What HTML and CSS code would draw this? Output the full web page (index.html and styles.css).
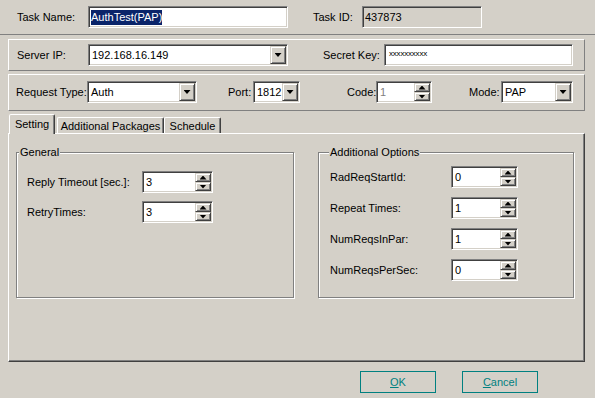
FILE: index.html
```html
<!DOCTYPE html>
<html lang="en">
<head>
    <meta charset="UTF-8">
    <title>Task Properties</title>
    <link rel="stylesheet" href="styles.css">
</head>
<body>
    <div class="dialog">
        <div class="top-bar">
            <div class="row">
                <span class="label w-71">Task Name:</span>
                <div class="field sunken w-name"><span class="sel">AuthTest(PAP)</span></div>
                <span class="label task-id-label">Task ID:</span>
                <div class="field sunken readonly w-id">437873</div>
            </div>
        </div>

        <div class="panel panel-server">
            <div class="row">
                <span class="label w-71">Server IP:</span>
                <div class="combo sunken w-server">
                    <span class="combo-value">192.168.16.149</span>
                    <span class="drop-btn raised"></span>
                </div>
                <span class="label secret-label">Secret Key:</span>
                <div class="field sunken w-secret"><span class="secret">xxxxxxxxxx</span></div>
            </div>
        </div>

        <div class="panel panel-request">
            <div class="row">
                <span class="label w-71">Request Type:</span>
                <div class="combo sunken w-type">
                    <span class="combo-value">Auth</span>
                    <span class="drop-btn raised"></span>
                </div>
                <span class="label port-label">Port:</span>
                <div class="combo sunken w-port">
                    <span class="combo-value">1812</span>
                    <span class="drop-btn raised"></span>
                </div>
                <span class="label code-label">Code:</span>
                <div class="spin sunken w-code">
                    <span class="spin-value disabled">1</span>
                    <span class="spin-btns"><span class="spin-up raised"></span><span class="spin-down raised"></span></span>
                </div>
                <span class="label mode-label">Mode:</span>
                <div class="combo sunken w-mode">
                    <span class="combo-value">PAP</span>
                    <span class="drop-btn raised"></span>
                </div>
            </div>
        </div>

        <div class="tabs">
            <div class="tab active">Setting</div>
            <div class="tab tab-packages">Additional Packages</div>
            <div class="tab tab-schedule">Schedule</div>
        </div>

        <div class="page">
            <div class="group group-general">
                <span class="legend">General</span>
                <div class="form-row">
                    <span class="label">Reply Timeout [sec.]:</span>
                    <div class="spin sunken w-spin-general">
                        <span class="spin-value">3</span>
                        <span class="spin-btns"><span class="spin-up raised"></span><span class="spin-down raised"></span></span>
                    </div>
                </div>
                <div class="form-row">
                    <span class="label">RetryTimes:</span>
                    <div class="spin sunken w-spin-general">
                        <span class="spin-value">3</span>
                        <span class="spin-btns"><span class="spin-up raised"></span><span class="spin-down raised"></span></span>
                    </div>
                </div>
            </div>

            <div class="group group-options">
                <span class="legend">Additional Options</span>
                <div class="form-row">
                    <span class="label">RadReqStartId:</span>
                    <div class="spin sunken w-spin-options">
                        <span class="spin-value">0</span>
                        <span class="spin-btns"><span class="spin-up raised"></span><span class="spin-down raised"></span></span>
                    </div>
                </div>
                <div class="form-row">
                    <span class="label">Repeat Times:</span>
                    <div class="spin sunken w-spin-options">
                        <span class="spin-value">1</span>
                        <span class="spin-btns"><span class="spin-up raised"></span><span class="spin-down raised"></span></span>
                    </div>
                </div>
                <div class="form-row">
                    <span class="label">NumReqsInPar:</span>
                    <div class="spin sunken w-spin-options">
                        <span class="spin-value">1</span>
                        <span class="spin-btns"><span class="spin-up raised"></span><span class="spin-down raised"></span></span>
                    </div>
                </div>
                <div class="form-row">
                    <span class="label">NumReqsPerSec:</span>
                    <div class="spin sunken w-spin-options">
                        <span class="spin-value">0</span>
                        <span class="spin-btns"><span class="spin-up raised"></span><span class="spin-down raised"></span></span>
                    </div>
                </div>
            </div>
        </div>

        <div class="actions">
            <button class="btn"><u>O</u>K</button>
            <button class="btn"><u>C</u>ancel</button>
        </div>
    </div>
</body>
</html>
```

FILE: styles.css
```css
* {
    margin: 0;
    padding: 0;
    box-sizing: border-box;
}

body {
    width: 595px;
    height: 398px;
    overflow: hidden;
    background: #d4d0c8;
    color: #000;
    font-family: "Liberation Sans", Arial, sans-serif;
    font-size: 11px;
}

.dialog {
    display: flex;
    flex-direction: column;
    height: 100%;
}

.row {
    display: flex;
    align-items: center;
    height: 22px;
}

.label {
    white-space: nowrap;
}

.w-71 { width: 71px; }

/* 3d borders */
.sunken {
    background: #fff;
    border: 1px solid;
    border-color: #808080 #fff #fff #808080;
    padding: 1px;
    box-shadow: inset 1px 1px #404040, inset -1px -1px #d4d0c8;
}

.raised {
    background: #d4d0c8;
    border: 1px solid;
    border-color: #d4d0c8 #404040 #404040 #d4d0c8;
    box-shadow: inset 1px 1px #fff, inset -1px -1px #808080;
}

.field {
    height: 22px;
    display: flex;
    align-items: center;
    padding-left: 2px;
}

.field.readonly {
    background: #d4d0c8;
}

.sel {
    background: #0a246a;
    color: #fff;
    line-height: 13px;
    padding: 1px 0;
}

.secret {
    font-size: 8px;
    letter-spacing: -0.2px;
    padding-left: 2px;
    padding-bottom: 3px;
}

.combo {
    height: 22px;
    display: flex;
}

.combo-value {
    flex: 1;
    align-self: center;
    padding-left: 2px;
    white-space: nowrap;
}

.drop-btn {
    width: 16px;
    display: flex;
    align-items: center;
    justify-content: center;
}

.drop-btn::after {
    content: "";
    width: 7px;
    height: 4px;
    background: #000;
    clip-path: polygon(0 0, 100% 0, 50% 100%);
}

.spin {
    height: 22px;
    display: flex;
}

.spin-value {
    flex: 1;
    align-self: center;
    padding-left: 2px;
}

.spin-value.disabled {
    color: #808080;
}

.spin-btns {
    width: 16px;
    display: flex;
    flex-direction: column;
}

.spin-up,
.spin-down {
    flex: 1;
    display: flex;
    align-items: center;
    justify-content: center;
}

.spin-up::after,
.spin-down::after {
    content: "";
    width: 7px;
    height: 4px;
    background: #000;
}

.spin-up::after {
    clip-path: polygon(50% 0, 100% 100%, 0 100%);
}

.spin-down::after {
    clip-path: polygon(0 0, 100% 0, 50% 100%);
}

/* top bar */
.top-bar {
    height: 35px;
    border-bottom: 1px solid #808080;
    padding: 6px 0 0 17px;
}

.w-name { width: 200px; }

.task-id-label {
    margin-left: 25px;
    width: 49px;
}

.w-id { width: 120px; }

/* panels */
.panel {
    margin-left: 8px;
    width: 577px;
    border: 1px solid;
    border-color: #fff #808080 #808080 #fff;
}

.panel-server {
    margin-top: 4px;
    height: 32px;
    padding: 4px 0 0 8px;
}

.w-server { width: 200px; }

.secret-label {
    margin-left: 35px;
    width: 61px;
}

.w-secret { width: 189px; }

.panel-request {
    margin-top: 3px;
    height: 37px;
    padding: 6px 0 0 7px;
}

.w-type { width: 110px; }

.port-label {
    margin-left: 31px;
    width: 25px;
}

.w-port { width: 47px; }

.code-label {
    margin-left: 47px;
    width: 29px;
}

.w-code { width: 56px; }

.mode-label {
    margin-left: 37px;
    width: 32px;
}

.w-mode { width: 72px; }

/* tabs */
.tabs {
    margin-top: 3px;
    height: 19px;
    padding-left: 9px;
    display: flex;
    align-items: flex-end;
}

.tab {
    height: 16px;
    display: flex;
    align-items: center;
    justify-content: center;
    border: 1px solid;
    border-bottom: none;
    border-color: #fff #404040 transparent #fff;
    border-radius: 2px 2px 0 0;
    box-shadow: inset -1px 0 #808080;
    white-space: nowrap;
}

.tab.active {
    width: 46px;
    height: 20px;
    margin-bottom: -1px;
    position: relative;
    z-index: 1;
    background: #d4d0c8;
    padding-bottom: 2px;
}

.tab-packages {
    width: 107px;
    margin-left: 2px;
}

.tab-schedule {
    width: 57px;
}

.page {
    margin-left: 8px;
    width: 577px;
    height: 229px;
    border: 1px solid;
    border-color: #fff #404040 #404040 #fff;
    box-shadow: inset -1px -1px #808080;
    display: flex;
    align-items: flex-start;
    gap: 24px;
    padding: 18px 0 0 7px;
}

/* group boxes */
.group {
    position: relative;
    height: 146px;
    border: 1px solid #808080;
    box-shadow: inset 1px 1px #fff, 1px 1px #fff;
    display: flex;
    flex-direction: column;
}

.legend {
    position: absolute;
    top: -7px;
    left: 2px;
    padding: 0 1px;
    background: #d4d0c8;
    line-height: 13px;
}

.group-general {
    width: 278px;
    padding: 18px 0 0 10px;
    gap: 8px;
}

.group-options {
    width: 256px;
    padding: 13px 0 0 11px;
    gap: 9px;
}

.group-options .legend {
    left: 10px;
}

.form-row {
    display: flex;
    align-items: center;
}

.group-general .label { width: 115px; }
.group-options .label { width: 121px; }

.w-spin-general { width: 71px; }
.w-spin-options { width: 67px; }

/* buttons */
.actions {
    margin-top: 9px;
    padding-right: 57px;
    display: flex;
    justify-content: flex-end;
    gap: 26px;
}

.btn {
    width: 76px;
    height: 22px;
    border: 1px solid #008080;
    background: transparent;
    color: #008080;
    font: inherit;
    cursor: pointer;
}
```
